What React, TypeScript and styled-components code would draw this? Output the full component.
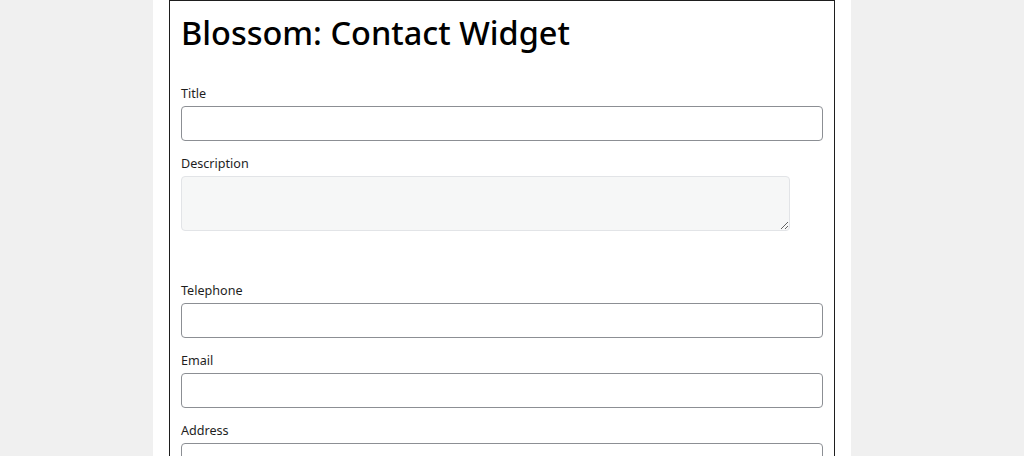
import * as React from 'react';
import styled, { createGlobalStyle } from 'styled-components';

const GlobalStyle = createGlobalStyle`
  html, body {
    margin: 0;
    padding: 0;
    background: #f0f0f0;
    font-family: "Noto Sans", "Open Sans", sans-serif;
    color: #1e1e1e;
  }
`;

const Page = styled.div`
  display: flex;
  padding-left: 153px;
  height: 456px;
  overflow: hidden;
`;

const Column = styled.div`
  width: 698px;
  box-sizing: border-box;
  padding: 0 16px;
  background: #fff;
`;

const Panel = styled.div`
  border: 1px solid #1e1e1e;
  padding: 10px 11px 20px;
  min-height: 600px;
`;

const Heading = styled.h1`
  margin: 0 0 29px;
  font-size: 32.5px;
  line-height: 44px;
  font-weight: 500;
  color: #000;
`;

const Field = styled.div<{ $gap?: number }>`
  display: flex;
  flex-direction: column;
  gap: 4px;
  margin-bottom: ${(p) => p.$gap ?? 13}px;
`;

const Label = styled.label`
  font-size: 12.6px;
  line-height: 17px;
  padding-top: 1px;
`;

const Input = styled.input`
  box-sizing: border-box;
  width: 642px;
  height: 35px;
  border: 1px solid #8c8f94;
  border-radius: 4px;
  background: #fff;
  padding: 0 8px;
  font: inherit;
`;

const TextArea = styled.textarea`
  box-sizing: border-box;
  width: 609px;
  height: 55px;
  border: 1px solid #e2e4e7;
  border-radius: 4px;
  background: #f6f7f7;
  font: inherit;
`;

export default function App() {
  return (
    <>
      <GlobalStyle />
      <Page>
        <Column>
          <Panel>
            <Heading>Blossom: Contact Widget</Heading>
            <Field>
              <Label>Title</Label>
              <Input />
            </Field>
            <Field $gap={50}>
              <Label>Description</Label>
              <TextArea disabled />
            </Field>
            <Field>
              <Label>Telephone</Label>
              <Input />
            </Field>
            <Field>
              <Label>Email</Label>
              <Input />
            </Field>
            <Field>
              <Label>Address</Label>
              <Input />
            </Field>
          </Panel>
        </Column>
      </Page>
    </>
  );
}
